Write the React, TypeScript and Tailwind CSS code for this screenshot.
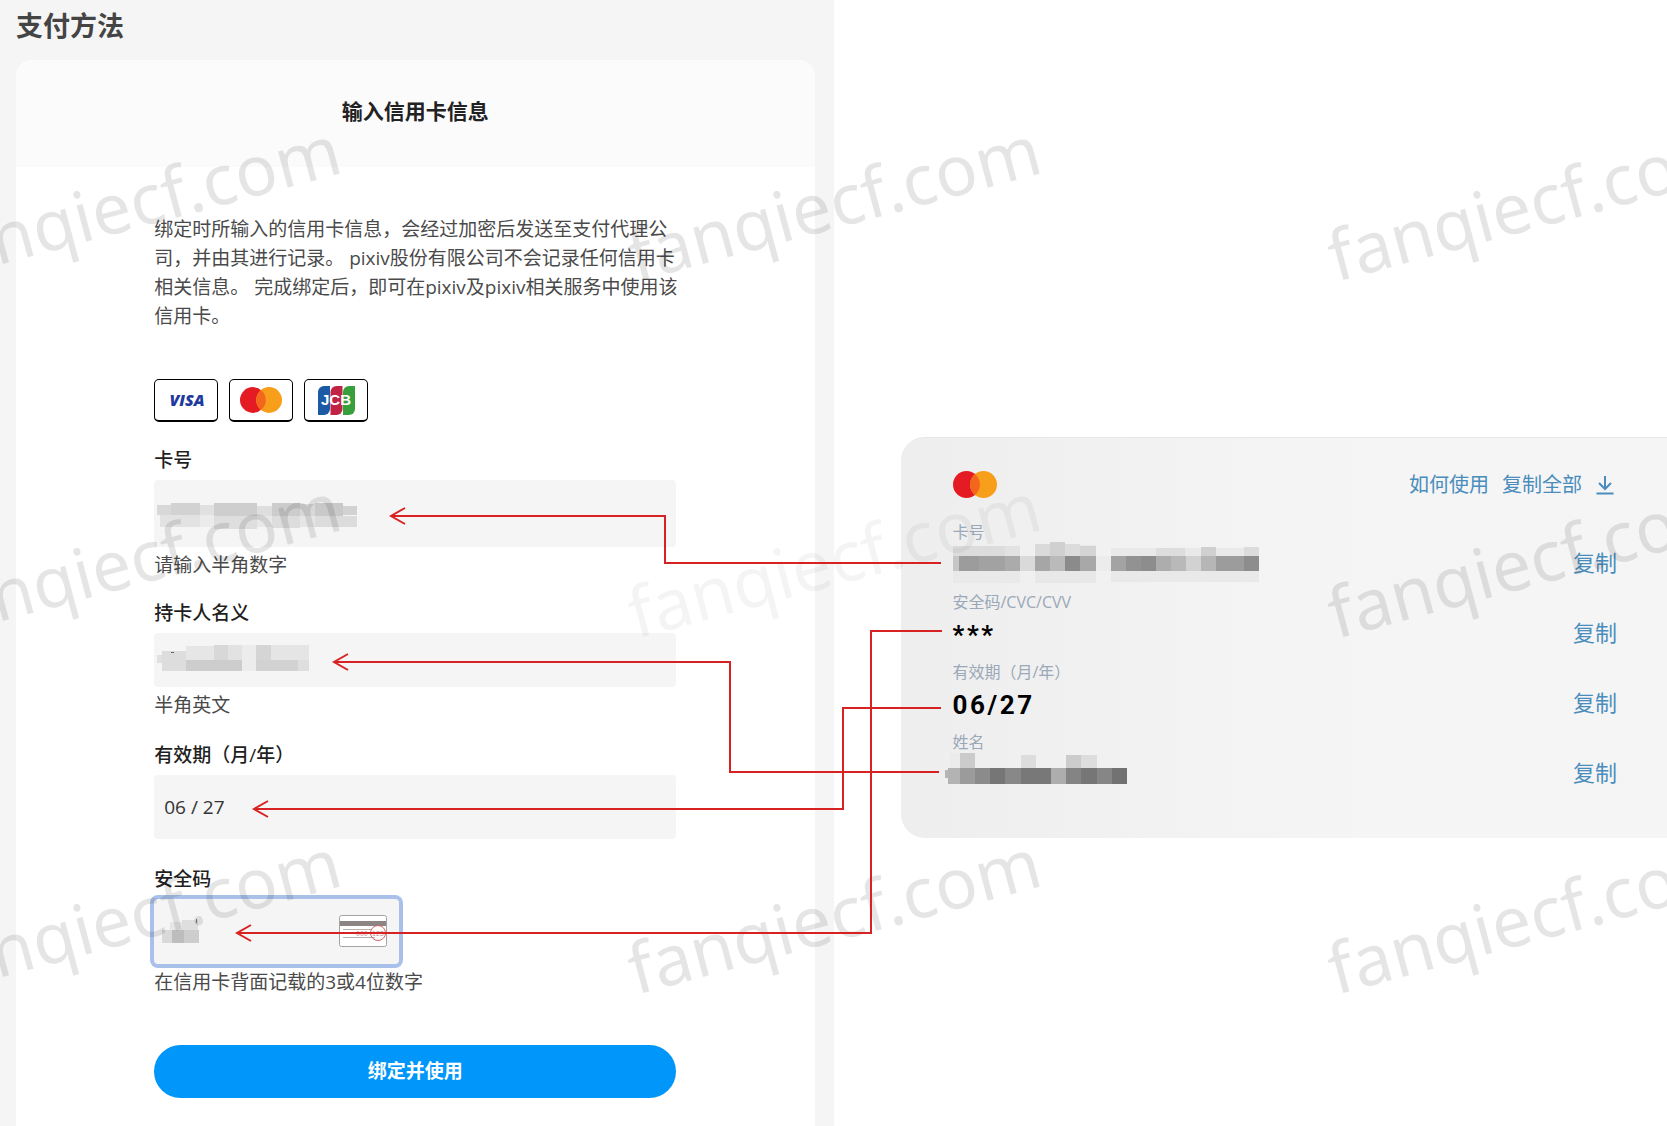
import React from 'react';

type Cell = [x: number, y: number, w: number, h: number, fill: string];

const cardNumberCells: Cell[] = [
  [0, 7, 67, 34, '#e9e9e9'], [82, 3, 61, 38, '#e8e8e8'], [158, 6, 148, 34, '#e9e9e9'],
  [0, 4, 52, 10, '#dcdcdc'], [52, 4, 15, 10, '#e2e2e2'], [82, 2, 15, 12, '#dadada'], [97, 0, 15, 14, '#d0d0d0'],
  [112, 2, 15, 12, '#dcdcdc'], [127, 4, 16, 10, '#d4d4d4'], [203, 6, 29, 8, '#dddddd'], [248, 5, 15, 9, '#d0d0d0'], [291, 5, 15, 9, '#dcdcdc'],
  [0, 14, 6, 15, '#c6c6c6'], [6, 14, 20, 15, '#9c9c9c'], [26, 14, 26, 15, '#a2a2a2'], [52, 14, 15, 15, '#ababab'],
  [67, 14, 15, 15, '#dadada'], [82, 14, 15, 15, '#a6a6a6'], [97, 14, 15, 15, '#bababa'], [112, 14, 15, 15, '#8b8b8b'],
  [127, 14, 16, 15, '#a8a8a8'], [143, 14, 15, 15, '#ececec'], [158, 14, 15, 15, '#a3a3a3'], [173, 14, 15, 15, '#929292'],
  [188, 14, 15, 15, '#8d8d8d'], [203, 14, 15, 15, '#adadad'], [218, 14, 15, 15, '#b9b9b9'], [233, 14, 15, 15, '#d2d2d2'],
  [248, 14, 15, 15, '#b6b6b6'], [263, 14, 28, 15, '#9c9c9c'], [291, 14, 15, 15, '#8d8d8d'],
];

const nameCells: Cell[] = [
  [5, 0, 10, 15, '#ebebeb'], [15, 0, 15, 15, '#cbcbcb'], [76, 2, 15, 13, '#dddddd'],
  [121, 2, 15, 13, '#cccccc'], [136, 2, 16, 13, '#dddddd'],
  [0, 17, 3, 8, '#b5b5b5'], [3, 15, 12, 16, '#b3b3b3'], [15, 15, 15, 16, '#9b9b9b'], [30, 15, 15, 16, '#8b8b8b'],
  [45, 15, 15, 16, '#767676'], [60, 15, 16, 16, '#888888'], [76, 15, 30, 16, '#787878'], [106, 15, 15, 16, '#adadad'],
  [121, 15, 15, 16, '#848484'], [136, 15, 16, 16, '#767676'], [152, 15, 15, 16, '#868686'], [167, 15, 15, 16, '#727272'],
];

const inputNumberCells: Cell[] = [
  [0, 2, 14, 10, '#d8d8d8'], [14, 0, 29, 12, '#d2d2d2'], [43, 2, 14, 10, '#e0e0e0'], [57, 0, 43, 13, '#cecece'],
  [100, 3, 15, 10, '#dedede'], [115, 0, 28, 13, '#cccccc'], [143, 1, 15, 12, '#d8d8d8'], [158, 0, 28, 13, '#c9c9c9'], [186, 3, 14, 9, '#d2d2d2'],
  [3, 12, 40, 12, '#e2e2e2'], [43, 12, 14, 12, '#ebebeb'], [57, 13, 43, 13, '#dedede'], [100, 13, 15, 11, '#e8e8e8'],
  [115, 13, 28, 12, '#dddddd'], [143, 13, 15, 11, '#e6e6e6'], [158, 13, 42, 11, '#dcdcdc'],
];

const inputNameCells: Cell[] = [
  [0, 10, 5, 8, '#e0e0e0'], [5, 6, 24, 20, '#dddddd'], [29, 1, 28, 14, '#e6e6e6'], [57, 0, 14, 15, '#d8d8d8'],
  [71, 0, 14, 15, '#e2e2e2'], [85, 0, 14, 26, '#ececec'], [99, 0, 15, 15, '#d5d5d5'], [114, 0, 38, 15, '#e5e5e5'],
  [29, 15, 56, 11, '#cdcdcd'], [99, 15, 42, 11, '#d2d2d2'], [141, 15, 11, 11, '#dedede'], [14, 7, 3, 1, '#666666'],
];

const inputCvvCells: Cell[] = [
  [8, 3, 12, 8, '#e6e6e6'], [20, 1, 16, 10, '#dedede'], [34, 0, 1, 4, '#777777'],
  [0, 11, 10, 13, '#d9d9d9'], [10, 11, 12, 13, '#bdbdbd'], [22, 11, 15, 13, '#cdcdcd'],
];

const Mosaic: React.FC<{ cells: Cell[]; width: number; height: number; className?: string }> = ({ cells, width, height, className }) => (
  <svg width={width} height={height} className={className} shapeRendering="crispEdges" aria-hidden="true">
    {cells.map(([x, y, w, h, fill], index) => (
      <rect key={index} x={x} y={y} width={w} height={h} fill={fill} />
    ))}
  </svg>
);

const MastercardLogo: React.FC<{ className: string }> = ({ className }) => (
  <svg viewBox="0 0 44 27" className={className} role="img" aria-label="Mastercard">
    <circle cx="13.5" cy="13.5" r="13.5" fill="#e51b24" />
    <circle cx="30.5" cy="13.5" r="13.5" fill="#f79e1b" />
    <path d="M22 3a13.5 13.5 0 0 1 0 21a13.5 13.5 0 0 1 0-21z" fill="#f4661e" />
  </svg>
);

const VisaLogo = () => (
  <svg viewBox="0 0 48 28" className="h-7 w-12" role="img" aria-label="Visa">
    <text x="25" y="20" textAnchor="middle" fill="#1f3a9e" className="font-['Open_Sans'] text-[16px] font-extrabold italic">VISA</text>
  </svg>
);

const JcbLogo = () => (
  <svg viewBox="0 0 37 29" className="h-[29px] w-[37px]" role="img" aria-label="JCB">
    <path d="M6 0h6v23a6 6 0 0 1-6 6H0V6a6 6 0 0 1 6-6z" fill="#1d5aa6" />
    <path d="M18.500 0h6v23a6 6 0 0 1-6 6h-6V6a6 6 0 0 1 6-6z" fill="#c02444" />
    <path d="M31 0h6v23a6 6 0 0 1-6 6h-6V6a6 6 0 0 1 6-6z" fill="#37a03c" />
    <text x="18" y="19" textAnchor="middle" fill="#fff" className="font-['Liberation_Sans'] text-[15px] font-bold">JCB</text>
  </svg>
);

const CvvIcon = () => (
  <svg viewBox="0 0 48 33" className="absolute right-3 top-4 h-[33px] w-12" aria-hidden="true">
    <rect x=".5" y=".5" width="47" height="31" rx="2" fill="#fff" stroke="#a3a3a3" />
    <rect x="1" y="6" width="46" height="5" fill="#8c8583" />
    <path d="M4 14.500h28M4 22.500h32" stroke="#b9b0b0" />
    <text x="17" y="21" fill="#c98f8f" className="font-['Liberation_Sans'] text-[7px]">000</text>
    <text x="33" y="21" fill="#c98f8f" className="font-['Liberation_Sans'] text-[7px]">123</text>
    <circle cx="39" cy="18" r="7.500" fill="none" stroke="#cf6565" />
  </svg>
);

// red connectors: route from the card detail to the form field, then the arrow tip
const connectors = [
  { route: 'M941 563H665V516H391', tip: 'M405 508L391 516L405 524' },
  { route: 'M939 772H730V662H334', tip: 'M348 654L334 662L348 670' },
  { route: 'M941 708H843V809H254', tip: 'M268 801L254 809L268 817' },
  { route: 'M942 631H871V933H237', tip: 'M251 925L237 933L251 941' },
];

const watermarks = [282, 639, 995].flatMap((y) =>
  [-64, 636, 1336].map((x) => ({ x, y, faint: x === 636 && y === 639 }))
);

const Overlay = () => (
  <svg className="pointer-events-none absolute inset-0 h-full w-full" aria-hidden="true">
    {watermarks.map(({ x, y, faint }) => (
      <text
        key={`${x}-${y}`}
        transform={`translate(${x} ${y}) rotate(-15)`}
        fill="#000"
        fillOpacity={faint ? 0.045 : 0.1}
        className="font-['Noto_Sans'] text-[70px]"
      >
        fanqiecf.com
      </text>
    ))}
    {connectors.map(({ route, tip }) => (
      <path key={route} d={route + tip} fill="none" stroke="#d62222" strokeWidth="2" />
    ))}
  </svg>
);

const labelClass = 'block text-[19px] leading-6 font-medium text-[#1f1f1f]';
const inputClass = 'block w-full rounded-sm bg-[#f5f5f5] px-[10px] text-[19px] text-[#333] outline-none';
const hintClass = 'mt-1.5 text-[19px] leading-6 text-[#4a4a4a]';
const badgeClass = 'flex h-[43px] w-16 items-center justify-center rounded-[5px] border border-b-2 border-black bg-white';

const PaymentForm = () => (
  <form className="mx-auto w-full max-w-[522px] pt-12 pb-7" onSubmit={(e) => e.preventDefault()}>
    <p className="whitespace-nowrap text-[19px] leading-[29px] text-[#4a4a4a]">
      绑定时所输入的信用卡信息，会经过加密后发送至支付代理公<br />
      司，并由其进行记录。 pixiv股份有限公司不会记录任何信用卡<br />
      相关信息。 完成绑定后，即可在pixiv及pixiv相关服务中使用该<br />
      信用卡。
    </p>

    <div className="mt-12 flex gap-[11px]">
      <span className={badgeClass}><VisaLogo /></span>
      <span className={badgeClass}><MastercardLogo className="h-[26px] w-[42px]" /></span>
      <span className={badgeClass}><JcbLogo /></span>
    </div>

    <div className="mt-[26px]">
      <label htmlFor="card-number" className={labelClass}>卡号</label>
      <div className="relative mt-2">
        <input id="card-number" type="text" className={`${inputClass} h-[67px]`} />
        <Mosaic cells={inputNumberCells} width={200} height={26} className="absolute left-[3px] top-[23px]" />
      </div>
      <p className={hintClass}>请输入半角数字</p>
    </div>

    <div className="mt-6">
      <label htmlFor="card-holder" className={labelClass}>持卡人名义</label>
      <div className="relative mt-2">
        <input id="card-holder" type="text" className={`${inputClass} h-[54px]`} />
        <Mosaic cells={inputNameCells} width={152} height={26} className="absolute left-[3px] top-3" />
      </div>
      <p className={hintClass}>半角英文</p>
    </div>

    <div className="mt-[26px]">
      <label htmlFor="card-expiry" className={labelClass}>有效期（月/年）</label>
      <input id="card-expiry" type="text" defaultValue="06 / 27" className={`${inputClass} mt-2 h-16`} />
    </div>

    <div className="mt-7">
      <label htmlFor="card-cvv" className={labelClass}>安全码</label>
      <div className="relative mt-2 w-[245px]">
        <input id="card-cvv" type="text" className={`${inputClass} h-[65px] ring-4 ring-[#a9c1ea]`} />
        <Mosaic cells={inputCvvCells} width={37} height={24} className="absolute left-2 top-5" />
        <CvvIcon />
      </div>
      <p className={hintClass}>在信用卡背面记载的3或4位数字</p>
    </div>

    <button type="submit" className="mt-[51px] block h-[53px] w-full rounded-full bg-[#0096fa] text-[19px] font-bold text-white">
      绑定并使用
    </button>
  </form>
);

const detailLabelClass = 'text-base leading-6 text-[#9aa8b7]';

const details = [
  { label: '卡号', value: <Mosaic cells={cardNumberCells} width={306} height={41} /> },
  { label: '安全码/CVC/CVV', value: <span className="mt-1.5 font-['Roboto'] text-[26px] leading-9 font-bold tracking-widest text-black">***</span> },
  { label: '有效期（月/年）', value: <span className="mt-1.5 font-['Roboto'] text-[26px] leading-9 font-bold tracking-widest text-black">06/27</span> },
  { label: '姓名', value: <Mosaic cells={nameCells} width={182} height={31} className="-ml-2 -mt-2" /> },
];

const CardDetails = () => (
  <section className="rounded-l-3xl border-t border-[#e3e8ea] bg-linear-to-r from-[#eeeeee] to-[#f5f5f5] to-60% pt-[33px] pr-[50px] pb-12 pl-[52px]">
    <div className="flex h-[27px] items-center">
      <MastercardLogo className="h-[27px] w-11" />
      <div className="ml-auto flex items-center gap-[13px] text-xl text-[#4a8dbd]">
        <a href="#usage">如何使用</a>
        <button type="button">复制全部</button>
        <button type="button" aria-label="下载">
          <svg viewBox="0 0 22 20" className="h-5 w-[22px]" fill="none" stroke="currentColor" strokeWidth="2">
            <path d="M10 1v12.500M4 8l6 6l6-6M1.500 18.500h17" />
          </svg>
        </button>
      </div>
    </div>

    <div className="mt-[22px] flex flex-col gap-[10px]">
      {details.map(({ label, value }) => (
        <div key={label} className="flex items-end justify-between">
          <div>
            <div className={detailLabelClass}>{label}</div>
            <div className="flex h-9 items-center">{value}</div>
          </div>
          <button type="button" className="h-9 text-[22px] text-[#4a8dbd]">复制</button>
        </div>
      ))}
    </div>
  </section>
);

const App: React.FC = () => {
  return (
    <div className="relative flex min-h-screen overflow-hidden bg-white font-['Open_Sans','Noto_Sans_CJK_SC',sans-serif]">
      {/* Payment form */}
      <main className="flex w-1/2 flex-col bg-[#f5f5f5] pr-[19px] pl-4">
        <h1 className="flex h-[60px] items-center pb-2 text-[27px] font-bold text-[#444]">支付方法</h1>
        <div className="flex-1 rounded-t-2xl bg-white">
          <div className="flex h-[107px] items-center justify-center rounded-t-2xl bg-[#fbfbfb] pb-1">
            <h2 className="text-[21px] font-bold text-[#222]">输入信用卡信息</h2>
          </div>
          <PaymentForm />
        </div>
      </main>

      {/* Virtual card */}
      <aside className="flex-1 pt-[437px] pl-[67px]">
        <CardDetails />
      </aside>

      <Overlay />
    </div>
  );
};

export default App;
